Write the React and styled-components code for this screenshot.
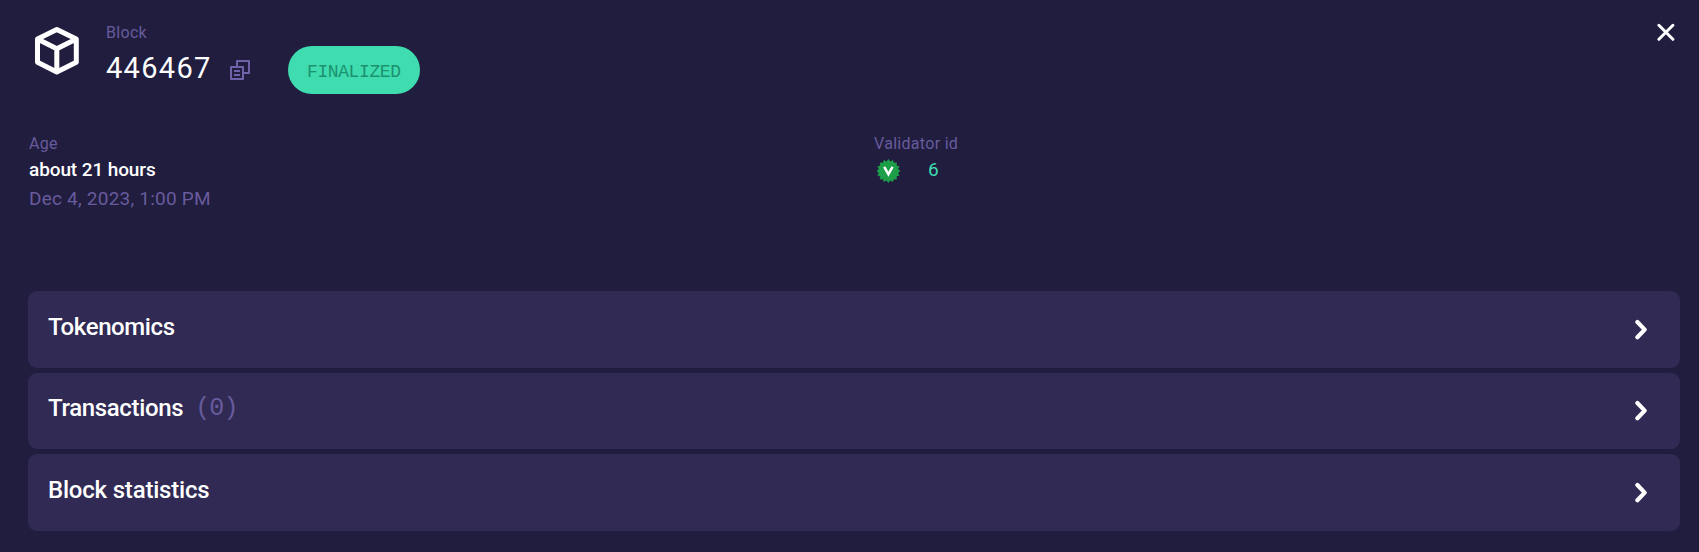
import React from "react";
import styled, { createGlobalStyle } from "styled-components";

const GlobalStyle = createGlobalStyle`
  * { box-sizing: border-box; }
  body { margin: 0; background: #211d3f; }
`;

const Page = styled.main`
  height: 552px;
  padding: 19px 19px 0 28px;
  background: #211d3f;
  color: #fff;
  font-family: Roboto, "Liberation Sans", sans-serif;
  white-space: nowrap;
  svg { display: block; flex: none; }
`;

const Header = styled.header`
  display: flex;
  align-items: flex-start;
  height: 114px;
`;

const CubeIcon = styled.svg`
  margin: 8px 27px 0 7px;
`;

const Label = styled.div`
  height: 27px;
  line-height: 27px;
  font-size: 16px;
  letter-spacing: 0.3px;
  color: #675b9c;
`;

const Title = styled.div`
  display: flex;
  align-items: center;
  height: 48px;
`;

const BlockNumber = styled.h1`
  width: 124px;
  margin: 0;
  padding-bottom: 5px;
  font-size: 29px;
  font-weight: 400;
  line-height: 40px;
  letter-spacing: 1.3px;
`;

const Status = styled.span`
  width: 132px;
  height: 48px;
  margin-left: 38px;
  padding-left: 19px;
  border-radius: 24px;
  background: #3edcae;
  color: #1c9270;
  font: 18px/52px "Liberation Mono", monospace;
  letter-spacing: -0.4px;
`;

const Close = styled.button`
  margin: 4px 5px 0 auto;
  padding: 0;
  border: 0;
  background: none;
  color: #fff;
`;

const Details = styled.section`
  display: grid;
  grid-template-columns: 845px 1fr;
  height: 158px;
`;

const Field = styled.div`
  padding-left: 1px;
  ${Label} { height: 24px; line-height: 22px; }
`;

const Value = styled.div`
  display: flex;
  align-items: center;
  height: 28px;
  font-size: 19px;
  line-height: 28px;
  font-weight: ${(p) => (p.$strong ? 500 : 400)};
  letter-spacing: ${(p) => p.$spacing || "0"};
  color: ${(p) => p.$color || "#fff"};
`;

const Primary = styled.span`
  padding-bottom: 3px;
`;

const Seal = styled.svg`
  margin: 0 27px 0 3px;
`;

const Panels = styled.section`
  display: grid;
  grid-template-rows: 77px 76px 77px;
  gap: 5px;
  width: 1652px;
`;

const Panel = styled.article`
  display: flex;
  align-items: center;
  justify-content: space-between;
  padding: 0 33px 0 20px;
  border-radius: 9px;
  background: #302a54;
`;

const PanelTitle = styled.h2`
  display: flex;
  margin: 0;
  padding-bottom: 6px;
  font-size: 24px;
  font-weight: 500;
  line-height: 28px;
  letter-spacing: ${(p) => p.$spacing};
`;

const Count = styled.span`
  margin-left: 12px;
  color: #675b9c;
  font: 25px/30px "Liberation Mono", monospace;
  height: 28px;
  letter-spacing: -0.9px;
`;

const sealPoints = Array.from({ length: 32 }, (_, i) => {
  const r = i % 2 ? 9.8 : 12;
  const a = (i * Math.PI) / 16;
  return `${12 + r * Math.sin(a)},${12 - r * Math.cos(a)}`;
}).join(" ");

const Chevron = () => (
  <svg width="14" height="24" viewBox="0 0 14 24" fill="none" stroke="#fff" strokeWidth="4.2" strokeLinecap="round" strokeLinejoin="round">
    <path d="M4.4 4 11.7 11.6l-7.3 7.6" />
  </svg>
);

const panels = [
  { title: "Tokenomics", spacing: "-0.4px" },
  { title: "Transactions", spacing: "-0.35px", count: "(0)" },
  { title: "Block statistics", spacing: "-0.2px" },
];

export default function App() {
  return (
    <Page>
      <GlobalStyle />
      <Header>
        <CubeIcon width="44" height="48" viewBox="0 0 44 48" fill="none" stroke="#fff" strokeWidth="5" strokeLinejoin="round">
          <path d="M21.8 2.6 41.3 12.1v23.2L21.8 45 2.5 35.3V12.1ZM2.5 12.1l19.3 9.7 19.5-9.7M21.8 21.8V45" />
        </CubeIcon>
        <div>
          <Label>Block</Label>
          <Title>
            <BlockNumber>446467</BlockNumber>
            <svg width="20" height="20" viewBox="0 0 20 20" fill="none" stroke="#7062a8" strokeWidth="2" strokeLinejoin="round">
              <path d="M7 7V1h12v12h-6M1 7h12v12H1ZM4 11h6M4 15h6" />
            </svg>
            <Status>FINALIZED</Status>
          </Title>
        </div>
        <Close aria-label="Close">
          <svg width="18" height="18" viewBox="0 0 18 18" fill="none" stroke="#fff" strokeWidth="3" strokeLinecap="round">
            <path d="m1.9 2.3 14 14M15.9 2.3l-14 14" />
          </svg>
        </Close>
      </Header>
      <Details>
        <Field>
          <Label>Age</Label>
          <Value $strong $spacing="-0.1px">
            <Primary>about 21 hours</Primary>
          </Value>
          <Value $color="#675b9c" $spacing="0.22px">Dec 4, 2023, 1:00 PM</Value>
        </Field>
        <Field>
          <Label>Validator id</Label>
          <Value $color="#3edcae">
            <Seal width="24" height="24" viewBox="0 0 24 24">
              <polygon points={sealPoints} fill="#1c9f48" transform="translate(-0.6 0)" />
              <path d="m7.2 7.8 4.2 7.4 4.2-7.4" fill="none" stroke="#fff" strokeWidth="2.4" />
            </Seal>
            <Primary>6</Primary>
          </Value>
        </Field>
      </Details>
      <Panels>
        {panels.map((p) => (
          <Panel key={p.title}>
            <PanelTitle $spacing={p.spacing}>
              {p.title}
              {p.count && <Count>{p.count}</Count>}
            </PanelTitle>
            <Chevron />
          </Panel>
        ))}
      </Panels>
    </Page>
  );
}
